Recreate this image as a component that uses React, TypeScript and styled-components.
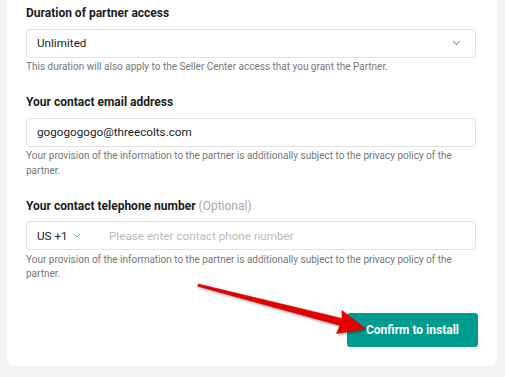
import styled, { createGlobalStyle } from "styled-components";

const GlobalStyle = createGlobalStyle`
  html, body {
    margin: 0;
    padding: 0;
    background: #f4f4f4;
    font-family: Roboto, "Liberation Sans", Arial, sans-serif;
  }
  * {
    box-sizing: border-box;
  }
`;

const Page = styled.div`
  position: relative;
  width: 505px;
  height: 377px;
  padding: 0 8px 9px 7px;
  overflow: hidden;
`;

const Card = styled.div`
  background: #fff;
  border-radius: 0 0 8px 8px;
  padding: 5px 21px 19px 19px;
  display: flex;
  flex-direction: column;
  gap: 19.5px;
`;

const Field = styled.div`
  display: flex;
  flex-direction: column;
`;

const Label = styled.div`
  font-size: 12px;
  line-height: 16px;
  font-weight: 700;
  color: #1c1c1c;
  margin-bottom: 7.5px;
`;

const Optional = styled.span`
  font-weight: 400;
  color: #aaa;
`;

const Box = styled.div`
  height: 29px;
  border: 1px solid #e0e0e0;
  border-radius: 4px;
  display: flex;
  align-items: center;
  padding: 0 14px 0 10px;
  font-size: 11.7px;
  color: #1c1c1c;
`;

const Value = styled.span`
  flex: 1;
`;

const Country = styled.span`
  display: flex;
  align-items: center;
  gap: 5px;
  width: 72px;
`;

const Placeholder = styled.span`
  color: #bbb;
`;

const Help = styled.div`
  font-size: 10px;
  line-height: 14.5px;
  color: #777;
  margin-top: 2.5px;
`;

const Actions = styled.div`
  display: flex;
  justify-content: flex-end;
  margin-top: 12px;
`;

const ConfirmButton = styled.button`
  width: 131px;
  height: 34px;
  margin-right: -2px;
  border: none;
  border-radius: 3px;
  background: #009b8f;
  color: #fff;
  font-family: inherit;
  font-size: 12px;
  font-weight: 700;
`;

const Overlay = styled.svg`
  position: absolute;
  left: 0;
  top: 0;
  pointer-events: none;
`;

const Chevron = ({ size = 9 }: { size?: number }) => (
  <svg width={size} height={size * 0.6} viewBox="0 0 10 6" fill="none">
    <path d="M1 1l4 4 4-4" stroke="#999" strokeWidth="1.2" />
  </svg>
);

const arrow =
  "198.2,284 342,318.4 342,310.5 366,329 336.5,333.5 340,325.4 197.8,286.2";

const App = () => (
  <>
    <GlobalStyle />
    <Page>
      <Card>
        <Field>
          <Label>Duration of partner access</Label>
          <Box>
            <Value>Unlimited</Value>
            <Chevron />
          </Box>
          <Help>
            This duration will also apply to the Seller Center access that you
            grant the Partner.
          </Help>
        </Field>
        <Field>
          <Label>Your contact email address</Label>
          <Box>
            <Value>gogogogogo@threecolts.com</Value>
          </Box>
          <Help>
            Your provision of the information to the partner is additionally
            subject to the privacy policy of the partner.
          </Help>
        </Field>
        <Field>
          <Label>
            Your contact telephone number <Optional>(Optional)</Optional>
          </Label>
          <Box>
            <Country>
              US +1 <Chevron size={8} />
            </Country>
            <Placeholder>Please enter contact phone number</Placeholder>
          </Box>
          <Help>
            Your provision of the information to the partner is additionally
            subject to the privacy policy of the partner.
          </Help>
        </Field>
        <Actions>
          <ConfirmButton>Confirm to install</ConfirmButton>
        </Actions>
      </Card>
      <Overlay width="505" height="377" viewBox="0 0 505 377">
        <defs>
          <filter id="blur" x="-10%" y="-10%" width="120%" height="120%">
            <feGaussianBlur stdDeviation="1" />
          </filter>
        </defs>
        <polygon
          points={arrow}
          transform="translate(1 2)"
          fill="#000"
          opacity="0.3"
          filter="url(#blur)"
        />
        <polygon points={arrow} fill="#e50000" stroke="#c80000" strokeWidth="0.6" />
      </Overlay>
    </Page>
  </>
);

export default App;
